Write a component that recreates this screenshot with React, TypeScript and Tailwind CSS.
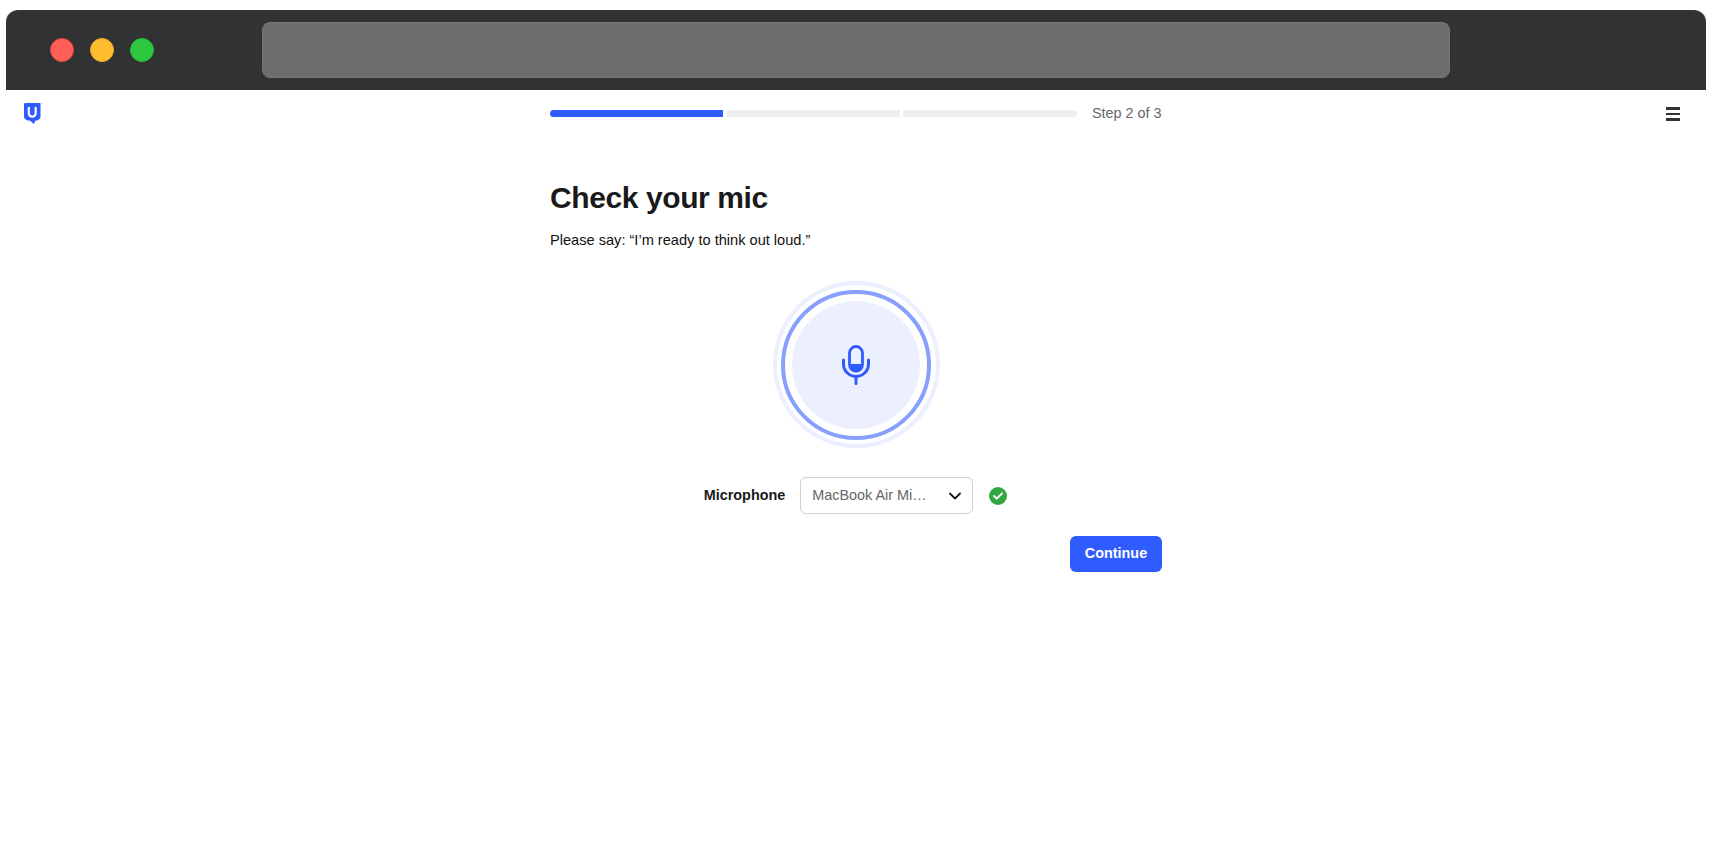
import { ChevronDown } from "lucide-react"

function Logo() {
  return (
    <svg width="20" height="23" viewBox="0 0 20 23" fill="none">
      <path
        d="M2.200 1h14.100a1.200 1.200 0 0 1 1.200 1.200v12.800a2 2 0 0 1-.6 1.400l-1.600 1.600a1.500 1.500 0 0 1-1 .4h-1.800l-1.500 3.600-4.200-3.600H4.500a1.500 1.500 0 0 1-1-.4l-1.900-1.600A2 2 0 0 1 1 15V2.200A1.200 1.200 0 0 1 2.200 1z"
        fill="#2f5bff"
      />
      <path d="M5.800 5v6.200a3.450 3.450 0 0 0 6.900 0V5" stroke="#fff" strokeWidth="2.200" />
      <circle cx="18.700" cy="1.500" r=".7" fill="#a9bcff" />
    </svg>
  )
}

function MicIcon() {
  return (
    <svg width="28" height="40" viewBox="0 0 28 40" fill="none">
      <rect x="7.500" y="1.500" width="13" height="24.600" rx="6.500" stroke="#2f5bff" strokeWidth="2.800" />
      <path d="M8 19h12v1.500a6 6 0 0 1-12 0z" fill="#2f5bff" />
      <path
        d="M1.500 15v3.900a12.500 12.500 0 0 0 25 0V15"
        stroke="#2f5bff"
        strokeWidth="3"
        strokeLinecap="round"
      />
      <path d="M14 32v6.500" stroke="#2f5bff" strokeWidth="3" strokeLinecap="round" />
    </svg>
  )
}

function StepBar() {
  return (
    <div className="flex items-center">
      <div className="h-[7px] w-[173px] rounded-l-full bg-[#2f5bff]" />
      <div className="ml-[4px] h-[7px] w-[173px] bg-[#efefef]" />
      <div className="ml-[3px] h-[7px] w-[174px] rounded-r-full bg-[#efefef]" />
      <span className="ml-[15px] text-[14.4px] whitespace-nowrap text-[#666666]">Step 2 of 3</span>
    </div>
  )
}

export default function App() {
  return (
    <div className="min-h-[854px] bg-white pt-[10px] font-['Liberation_Sans',Arial,sans-serif] text-[#1a1a1a]">
      {/* Browser chrome */}
      <div className="mx-[6px] flex h-[80px] items-center rounded-t-[12px] bg-[#313234] pl-[44px]">
        <div className="flex gap-4">
          <div className="h-6 w-6 rounded-full border-[1.5px] border-[#e0483f] bg-[#ff5f57]" />
          <div className="h-6 w-6 rounded-full border-[1.5px] border-[#e9ad2c] bg-[#febc2e]" />
          <div className="h-6 w-6 rounded-full border-[1.5px] border-[#2bb93e] bg-[#2dc840]" />
        </div>
        <div className="ml-[108px] h-[56px] w-[1188px] rounded-lg border border-[#767676] bg-[#6d6d6d]" />
      </div>

      {/* Header */}
      <div className="grid h-[48px] grid-cols-[1fr_612px_1fr] items-center">
        <div className="mb-[1px] pl-[23px]">
          <Logo />
        </div>
        <StepBar />
        <div className="flex justify-end pr-[32px]">
          <div className="flex w-[14px] flex-col gap-[3px]">
            <div className="h-[2.500px] bg-[#333333]" />
            <div className="h-[2.500px] bg-[#333333]" />
            <div className="h-[2.500px] bg-[#333333]" />
          </div>
        </div>
      </div>

      {/* Main */}
      <div className="mx-auto w-[612px]">
        <h1 className="mt-[42px] text-[30px] leading-[36px] font-bold tracking-[-0.4px]">Check your mic</h1>
        <p className="mt-[14px] text-[14.6px] leading-5 text-[#111111]">Please say: “I’m ready to think out loud.”</p>

        <div className="mt-[31px] flex justify-center">
          <div className="flex h-[167px] w-[167px] items-center justify-center rounded-full border-4 border-[#ebeffe]">
            <div className="flex h-[150px] w-[150px] shrink-0 items-center justify-center rounded-full border-4 border-[#87a0fb]">
              <div className="flex h-[128px] w-[128px] shrink-0 items-center justify-center rounded-full bg-[#ebeffe]">
                <MicIcon />
              </div>
            </div>
          </div>
        </div>

        <div className="mt-[29px] flex items-center justify-center gap-[15px]">
          <span className="text-[14.4px] font-bold">Microphone</span>
          <div className="flex h-[37px] w-[173px] items-center justify-between rounded-md border border-[#d0d0d0] pr-[7px] pl-[11px] text-[14.4px] text-[#666666]">
            <span>MacBook Air Mi…</span>
            <ChevronDown className="h-5 w-5 text-[#1a1a1a]" strokeWidth={2.2} />
          </div>
          <div className="mx-px flex h-[18px] w-[18px] items-center justify-center rounded-full bg-[#34a745]">
            <svg width="10" height="8" viewBox="0 0 10 8" fill="none">
              <path d="M1 4l2.700 2.700L9 1.300" stroke="#fff" strokeWidth="1.800" strokeLinecap="round" strokeLinejoin="round" />
            </svg>
          </div>
        </div>

        <div className="mt-[22px] flex justify-end">
          <button className="h-[36px] w-[92px] rounded-md bg-[#2f5bff] text-[14.4px] font-bold text-white">Continue</button>
        </div>
      </div>
    </div>
  )
}
